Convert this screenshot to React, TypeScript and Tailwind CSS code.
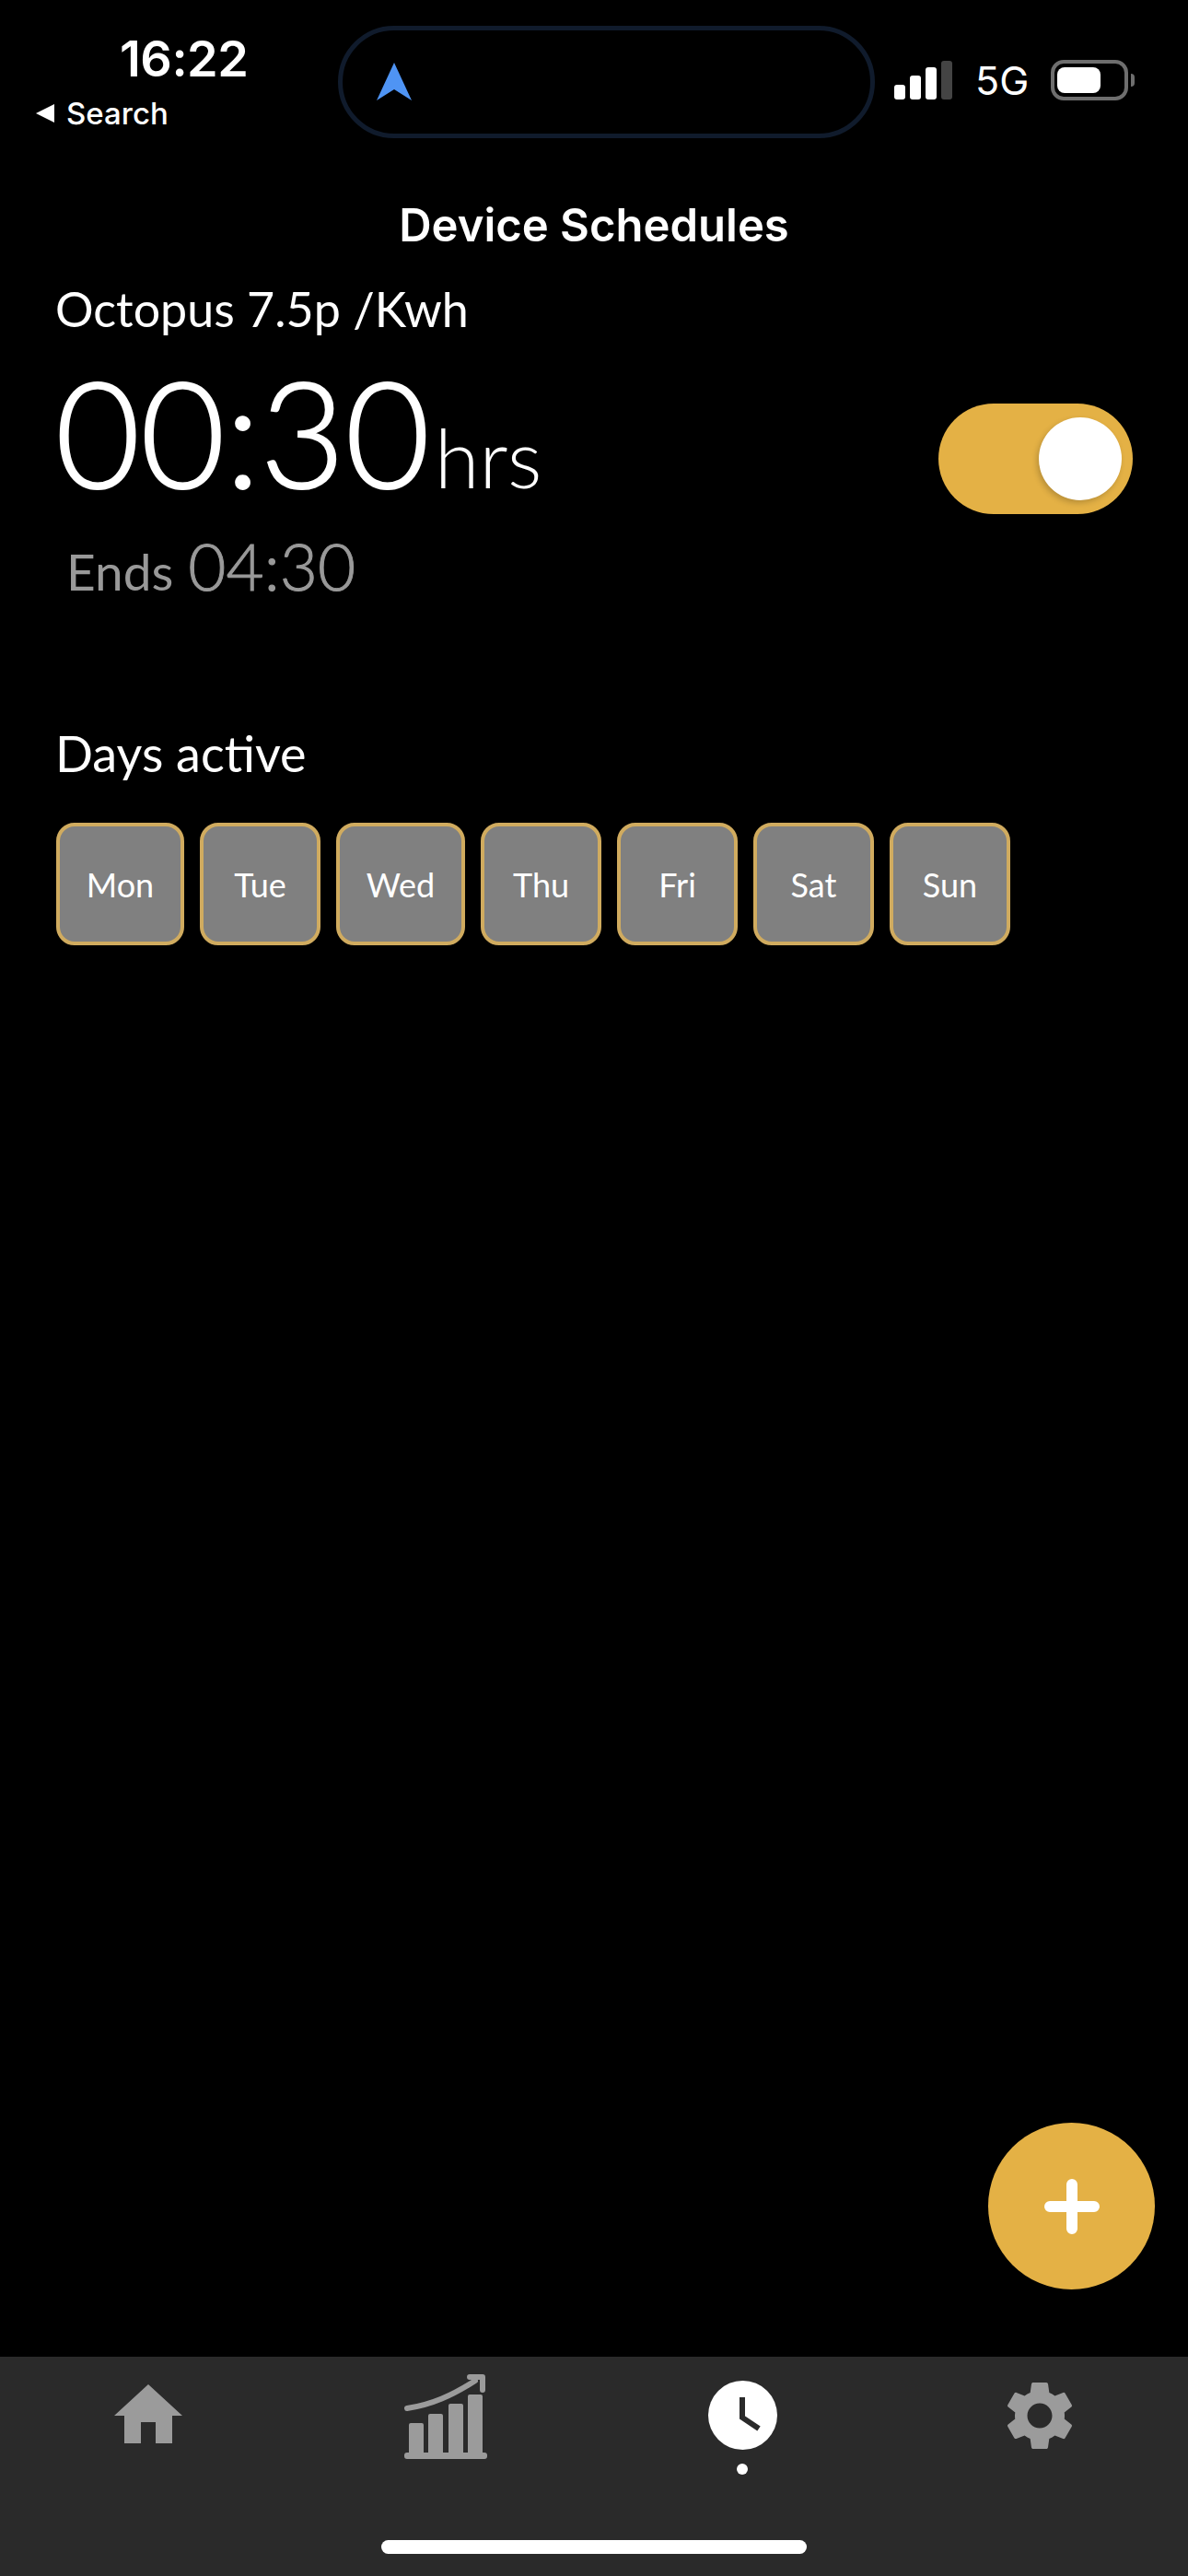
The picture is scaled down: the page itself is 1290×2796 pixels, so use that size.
import { MdSettings } from "react-icons/md";

const days = [
  { label: "Mon", width: "w-[139px]" },
  { label: "Tue", width: "w-[131px]" },
  { label: "Wed", width: "w-[140px]" },
  { label: "Thu", width: "w-[131px]" },
  { label: "Fri", width: "w-[131px]" },
  { label: "Sat", width: "w-[131px]" },
  { label: "Sun", width: "w-[131px]" },
];

function StatusBar() {
  return (
    <div className="flex h-[150px] shrink-0 items-start pt-[28px] font-['Inter',sans-serif] text-white">
      <div className="w-[367px] shrink-0 pl-[38px]">
        <div className="pl-[92px] pt-[8px] text-[54px] leading-[56px] font-semibold tracking-[-0.5px]">16:22</div>
        <div className="mt-[14px] flex items-center gap-[12px]">
          <svg width="22" height="22" viewBox="0 0 22 22">
            <path d="M21 1V21L1 11Z" fill="#fff" />
          </svg>
          <span className="text-[33px] leading-[34px] font-medium">Search</span>
        </div>
      </div>
      <div className="flex h-[122px] w-[583px] shrink-0 items-center rounded-[61px] border-[5px] border-[#101b2c] pl-[37px]">
        <svg width="38" height="42" viewBox="0 0 38 42">
          <path d="M19 0L38 41L19 29L0 41Z" fill="#4f94f4" />
        </svg>
      </div>
      <div className="flex h-[118px] flex-1 items-center pl-[21px]">
        <div className="flex h-[42px] items-end gap-[5px]">
          <div className="h-[16px] w-[12px] rounded-[3px] bg-white" />
          <div className="h-[26px] w-[12px] rounded-[3px] bg-white" />
          <div className="h-[35px] w-[12px] rounded-[3px] bg-white" />
          <div className="h-[42px] w-[12px] rounded-[3px] bg-[#444444]" />
        </div>
        <span className="ml-[25px] text-[43px] leading-none font-normal">5G</span>
        <div className="ml-[24px] flex h-[44px] w-[84px] items-center rounded-[14px] border-[4px] border-[#6e6e6e] pl-[3px]">
          <div className="h-[28px] w-[47px] rounded-[8px] bg-white" />
        </div>
        <div className="ml-[3px] h-[14px] w-[4px] rounded-r-full bg-[#6e6e6e]" />
      </div>
    </div>
  );
}

function HomeIcon() {
  return (
    <svg width="74" height="64" viewBox="0 0 74 64" fill="#9b9b9b">
      <path d="M37 0L74 34H63V64H45V41H29V64H11V34H0Z" />
    </svg>
  );
}

function ChartIcon() {
  return (
    <svg width="90" height="92" viewBox="0 0 90 92" fill="#9b9b9b">
      <path d="M3 37C30 33 52 23 77 7" fill="none" stroke="#9b9b9b" strokeWidth="6" strokeLinecap="round" />
      <path d="M71 3H85V17" fill="none" stroke="#9b9b9b" strokeWidth="6" strokeLinejoin="round" strokeLinecap="round" />
      <rect x="5" y="53" width="16" height="36" rx="2" />
      <rect x="26" y="43" width="16" height="46" rx="2" />
      <rect x="48" y="32" width="16" height="57" rx="2" />
      <rect x="69" y="22" width="16" height="67" rx="2" />
      <rect x="0" y="85" width="90" height="7" rx="3" />
    </svg>
  );
}

function ClockIcon() {
  return (
    <svg width="75" height="75" viewBox="0 0 75 75">
      <circle cx="37.5" cy="37.5" r="37.5" fill="#fff" />
      <path d="M37 18V40L55 52" fill="none" stroke="#2a2a2a" strokeWidth="6" />
    </svg>
  );
}

export default function App() {
  return (
    <div className="relative flex h-[2796px] w-[1290px] flex-col overflow-hidden bg-black font-['Lato',sans-serif] text-white">
      <StatusBar />

      <h1 className="mt-[65px] text-center font-['Inter',sans-serif] text-[49px] leading-[60px] font-semibold">
        Device Schedules
      </h1>

      <div className="flex-1 pl-[60px] pr-[60px]">
        <div className="mt-[30px] text-[52px] leading-[60px]">Octopus 7.5p /Kwh</div>
        <div className="mt-[24px] flex items-start justify-between">
          <div>
            <div className="flex items-baseline">
              <span className="text-[159px] leading-[160px] font-light [-webkit-text-stroke:2px_white]">00:30</span>
              <span className="ml-[5px] text-[88px] leading-none font-light">hrs</span>
            </div>
            <div className="mt-[29px] flex items-baseline pl-[12px] text-[#999999]">
              <span className="text-[55px] leading-[72px]">Ends</span>
              <span className="ml-[16px] text-[71px] leading-[72px] font-light [-webkit-text-stroke:1px_#999999]">04:30</span>
            </div>
          </div>
          <div className="mt-[49px] flex h-[120px] w-[211px] items-center justify-end rounded-[60px] bg-[#e4b145] pr-[12px]">
            <div className="h-[90px] w-[90px] rounded-full bg-white shadow-[-2px_3px_6px_rgba(0,0,0,0.2)]" />
          </div>
        </div>

        <div className="mt-[132px] text-[54px] leading-[60px]">Days active</div>
        <div className="ml-[1px] mt-[45px] flex gap-[17px]">
          {days.map((d) => (
            <div
              key={d.label}
              className={`flex h-[133px] items-center justify-center rounded-[20px] border-[4px] border-[#d0ab5f] bg-[#808080] text-[36px] ${d.width}`}
            >
              {d.label}
            </div>
          ))}
        </div>
      </div>

      <button className="absolute left-[1073px] top-[2304px] flex h-[181px] w-[181px] items-center justify-center rounded-full bg-[#e4b145]">
        <svg width="60" height="60" viewBox="0 0 60 60">
          <path d="M30 6V54M6 30H54" stroke="#fff" strokeWidth="12" strokeLinecap="round" />
        </svg>
      </button>

      <div className="flex h-[238px] shrink-0 flex-col bg-[#2a2a2a]">
        <div className="grid h-[199px] grid-cols-4 items-start">
          <div className="flex justify-center pt-[30px]">
            <HomeIcon />
          </div>
          <div className="flex justify-center pt-[19px]">
            <ChartIcon />
          </div>
          <div className="flex flex-col items-center pt-[26px]">
            <ClockIcon />
            <div className="mt-[15px] h-[12px] w-[12px] rounded-full bg-white" />
          </div>
          <div className="flex justify-center pt-[19px]">
            <MdSettings className="h-[90px] w-[90px] text-[#9b9b9b]" />
          </div>
        </div>
        <div className="mx-auto h-[15px] w-[462px] rounded-full bg-white" />
      </div>
    </div>
  );
}
